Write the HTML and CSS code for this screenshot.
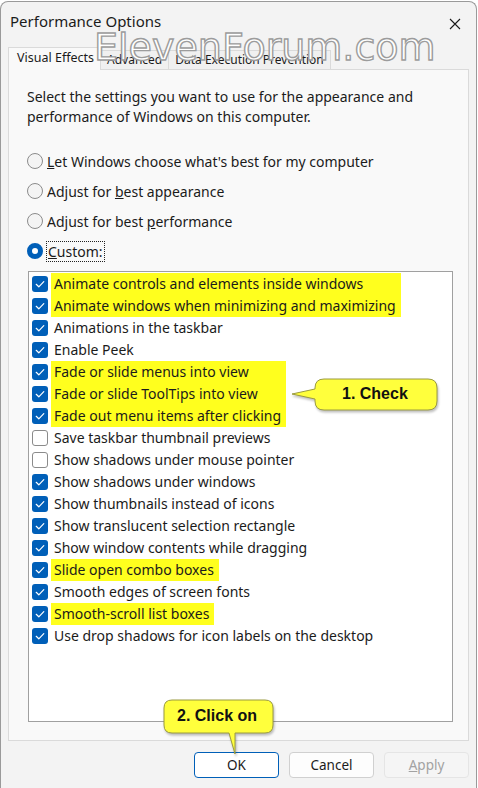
FILE: index.html
```html
<!DOCTYPE html>
<html lang="en">
<head>
    <meta charset="UTF-8">
    <title>Performance Options</title>
    <link rel="stylesheet" href="styles.css">
</head>
<body>
    <div class="window">
        <div class="titlebar">
            <span class="title">Performance Options</span>
            <svg class="close" width="12" height="12" viewBox="0 0 12 12"><path d="M1 1 L11 11 M11 1 L1 11" stroke="#1a1a1a" stroke-width="1.1" fill="none"/></svg>
        </div>

        <div class="tabs">
            <div class="tab active">Visual Effects</div>
            <div class="tab">Advanced</div>
            <div class="tab">Data Execution Prevention</div>
        </div>

        <div class="panel">
            <p class="intro">Select the settings you want to use for the appearance and performance of Windows on this computer.</p>

            <div class="radios">
                <div class="radio"><span class="dot"></span><span><u>L</u>et Windows choose what's best for my computer</span></div>
                <div class="radio"><span class="dot"></span><span>Adjust for <u>b</u>est appearance</span></div>
                <div class="radio"><span class="dot"></span><span>Adjust for best <u>p</u>erformance</span></div>
                <div class="radio"><span class="dot on"></span><span class="focus"><u>C</u>ustom:</span></div>
            </div>

            <div class="listbox">
                <div class="group">
                    <div class="boxes"><span class="cb on"></span><span class="cb on"></span></div>
                    <div class="labels hl">
                        <span>Animate controls and elements inside windows</span>
                        <span>Animate windows when minimizing and maximizing</span>
                    </div>
                </div>
                <div class="group">
                    <div class="boxes"><span class="cb on"></span><span class="cb on"></span></div>
                    <div class="labels">
                        <span>Animations in the taskbar</span>
                        <span>Enable Peek</span>
                    </div>
                </div>
                <div class="group">
                    <div class="boxes"><span class="cb on"></span><span class="cb on"></span><span class="cb on"></span></div>
                    <div class="labels hl">
                        <span>Fade or slide menus into view</span>
                        <span>Fade or slide ToolTips into view</span>
                        <span>Fade out menu items after clicking</span>
                    </div>
                </div>
                <div class="group">
                    <div class="boxes"><span class="cb"></span><span class="cb"></span><span class="cb on"></span><span class="cb on"></span><span class="cb on"></span><span class="cb on"></span></div>
                    <div class="labels">
                        <span>Save taskbar thumbnail previews</span>
                        <span>Show shadows under mouse pointer</span>
                        <span>Show shadows under windows</span>
                        <span>Show thumbnails instead of icons</span>
                        <span>Show translucent selection rectangle</span>
                        <span>Show window contents while dragging</span>
                    </div>
                </div>
                <div class="group">
                    <div class="boxes"><span class="cb on"></span></div>
                    <div class="labels hl"><span>Slide open combo boxes</span></div>
                </div>
                <div class="group">
                    <div class="boxes"><span class="cb on"></span></div>
                    <div class="labels"><span>Smooth edges of screen fonts</span></div>
                </div>
                <div class="group">
                    <div class="boxes"><span class="cb on"></span></div>
                    <div class="labels hl"><span>Smooth-scroll list boxes</span></div>
                </div>
                <div class="group">
                    <div class="boxes"><span class="cb on"></span></div>
                    <div class="labels"><span>Use drop shadows for icon labels on the desktop</span></div>
                </div>
            </div>
        </div>

        <div class="buttons">
            <button class="btn default">OK</button>
            <button class="btn">Cancel</button>
            <button class="btn disabled"><u>A</u>pply</button>
        </div>

        <!-- watermark and callouts sit on top of the dialog -->
        <div class="watermark">ElevenForum.com</div>

        <div class="callout callout-check">
            <svg width="152" height="40" viewBox="0 0 152 40">
                <path d="M34 3 H138 Q147 3 147 12 V25 Q147 34 138 34 H34 Q25 34 25 25 V23 L2 18 L25 13 V12 Q25 3 34 3 Z" fill="#ffff3c" stroke="#9a9a40" stroke-width="1"/>
            </svg>
            <span class="callout-text">1. Check</span>
        </div>

        <div class="callout callout-ok">
            <svg width="116" height="60" viewBox="0 0 116 60">
                <path d="M11 2 H104 Q112 2 112 10 V27 Q112 35 104 35 H98 L74 35 L74 56 L68 35 H11 Q3 35 3 27 V10 Q3 2 11 2 Z" fill="#ffff3c" stroke="#9a9a40" stroke-width="1"/>
            </svg>
            <span class="callout-text">2. Click on</span>
        </div>
    </div>
</body>
</html>
```

FILE: styles.css
```css
body {
    margin: 0;
    padding: 0;
    background-color: #fff;
    font-family: "Noto Sans", "Open Sans", sans-serif;
    font-size: 14px;
    color: #1b1b1b;
}

.window {
    position: relative;
    box-sizing: border-box;
    width: 477px;
    height: 788px;
    margin-top: 1px;
    border: 1px solid #9a9a9a;
    border-bottom: none;
    border-radius: 8px 8px 0 0;
    background-color: #f3f3f3;
    display: flex;
    flex-direction: column;
}

.titlebar {
    height: 45px;
    display: flex;
    justify-content: space-between;
    padding: 9px 15px 0 9px;
    box-sizing: border-box;
}

.title {
    font-size: 15px;
}

.close {
    margin-top: 7px;
}

/* tabs */
.tabs {
    display: flex;
    align-items: flex-end;
    margin-left: 7px;
    height: 22px;
}

.tab {
    height: 18px;
    line-height: 18px;
    padding: 0 6px;
    font-size: 12px;
    background-color: #f0f0f0;
    border: 1px solid #dadada;
    border-bottom: none;
    border-left: none;
}

.tab.active {
    height: 22px;
    line-height: 20px;
    padding: 0 6px 0 8px;
    font-size: 12.5px;
    background-color: #f9f9f9;
    border-left: 1px solid #dadada;
    position: relative;
    top: 1px;
    z-index: 1;
}

.panel {
    margin: 0 7px 0 7px;
    height: 672px;
    box-sizing: border-box;
    background-color: #f9f9f9;
    border: 1px solid #dadada;
    padding: 17px 15px 0 18px;
}

.intro {
    margin: 0;
    line-height: 20px;
}

.radios {
    margin-top: 24px;
    display: flex;
    flex-direction: column;
    gap: 10px;
}

.radio {
    display: flex;
    align-items: center;
    gap: 4px;
    height: 20px;
}

.dot {
    width: 14px;
    height: 14px;
    border: 1px solid #8b8b8b;
    border-radius: 50%;
    background-color: #f4f4f4;
    flex-shrink: 0;
}

.dot.on {
    border: 5px solid #005fb8;
    width: 6px;
    height: 6px;
    background-color: #fff;
}

.focus {
    outline: 1px dotted #222;
    padding: 0 1px;
}

/* list of effects */
.listbox {
    margin-top: 10px;
    margin-left: 1px;
    height: 451px;
    box-sizing: border-box;
    background-color: #fff;
    border: 1px solid #a0a0a0;
    padding: 1px 0 0 3px;
}

.group {
    display: flex;
}

.boxes {
    display: flex;
    flex-direction: column;
    width: 19px;
}

.cb {
    box-sizing: border-box;
    width: 16px;
    height: 16px;
    margin: 3px 0;
    border: 1px solid #8b8b8b;
    border-radius: 3px;
    background-color: #fff;
}

.cb.on {
    border: none;
    background-color: #005fb8;
    background-image: url("data:image/svg+xml;utf8,<svg xmlns='http://www.w3.org/2000/svg' width='16' height='16'><path d='M4.2 8.3 L6.8 10.8 L11.8 5.6' stroke='white' stroke-width='1.2' fill='none' stroke-linecap='round' stroke-linejoin='round'/></svg>");
}

.labels {
    display: flex;
    flex-direction: column;
    padding: 0 5px 0 3px;
}

.labels span {
    line-height: 22px;
    height: 22px;
    white-space: nowrap;
}

.labels.hl {
    background-color: #ffff1e;
}

/* bottom buttons */
.buttons {
    display: flex;
    justify-content: flex-end;
    gap: 10px;
    padding: 11px 7px 0 0;
}

.btn {
    width: 85px;
    height: 26px;
    font-family: "Noto Sans", "Open Sans", sans-serif;
    font-size: 13.5px;
    color: #1b1b1b;
    background-color: #fdfdfd;
    border: 1px solid #d0d0d0;
    border-radius: 4px;
    padding: 0;
}

.btn.default {
    border-color: #005fb8;
    background-color: #fff;
}

.btn.disabled {
    color: #a2a2a2;
    background-color: #f5f5f5;
    border-color: #e5e5e5;
}

/* overlays */
.watermark {
    position: absolute;
    left: 93px;
    top: 23px;
    font-family: "DejaVu Sans", sans-serif;
    font-size: 38px;
    color: #fff;
    -webkit-text-stroke: 1.4px #9c9c9c;
    z-index: 3;
}

.callout {
    position: absolute;
    z-index: 4;
}

.callout svg {
    display: block;
    filter: drop-shadow(1px 2px 1px rgba(0, 0, 0, 0.25));
}

.callout-text {
    position: absolute;
    font-family: "Liberation Sans", Arial, sans-serif;
    font-weight: bold;
    font-size: 16px;
    color: #111;
}

.callout-check {
    left: 289px;
    top: 374px;
}

.callout-check .callout-text {
    left: 52px;
    top: 9px;
}

.callout-ok {
    left: 160px;
    top: 696px;
}

.callout-ok .callout-text {
    left: 16px;
    top: 9px;
}
```
